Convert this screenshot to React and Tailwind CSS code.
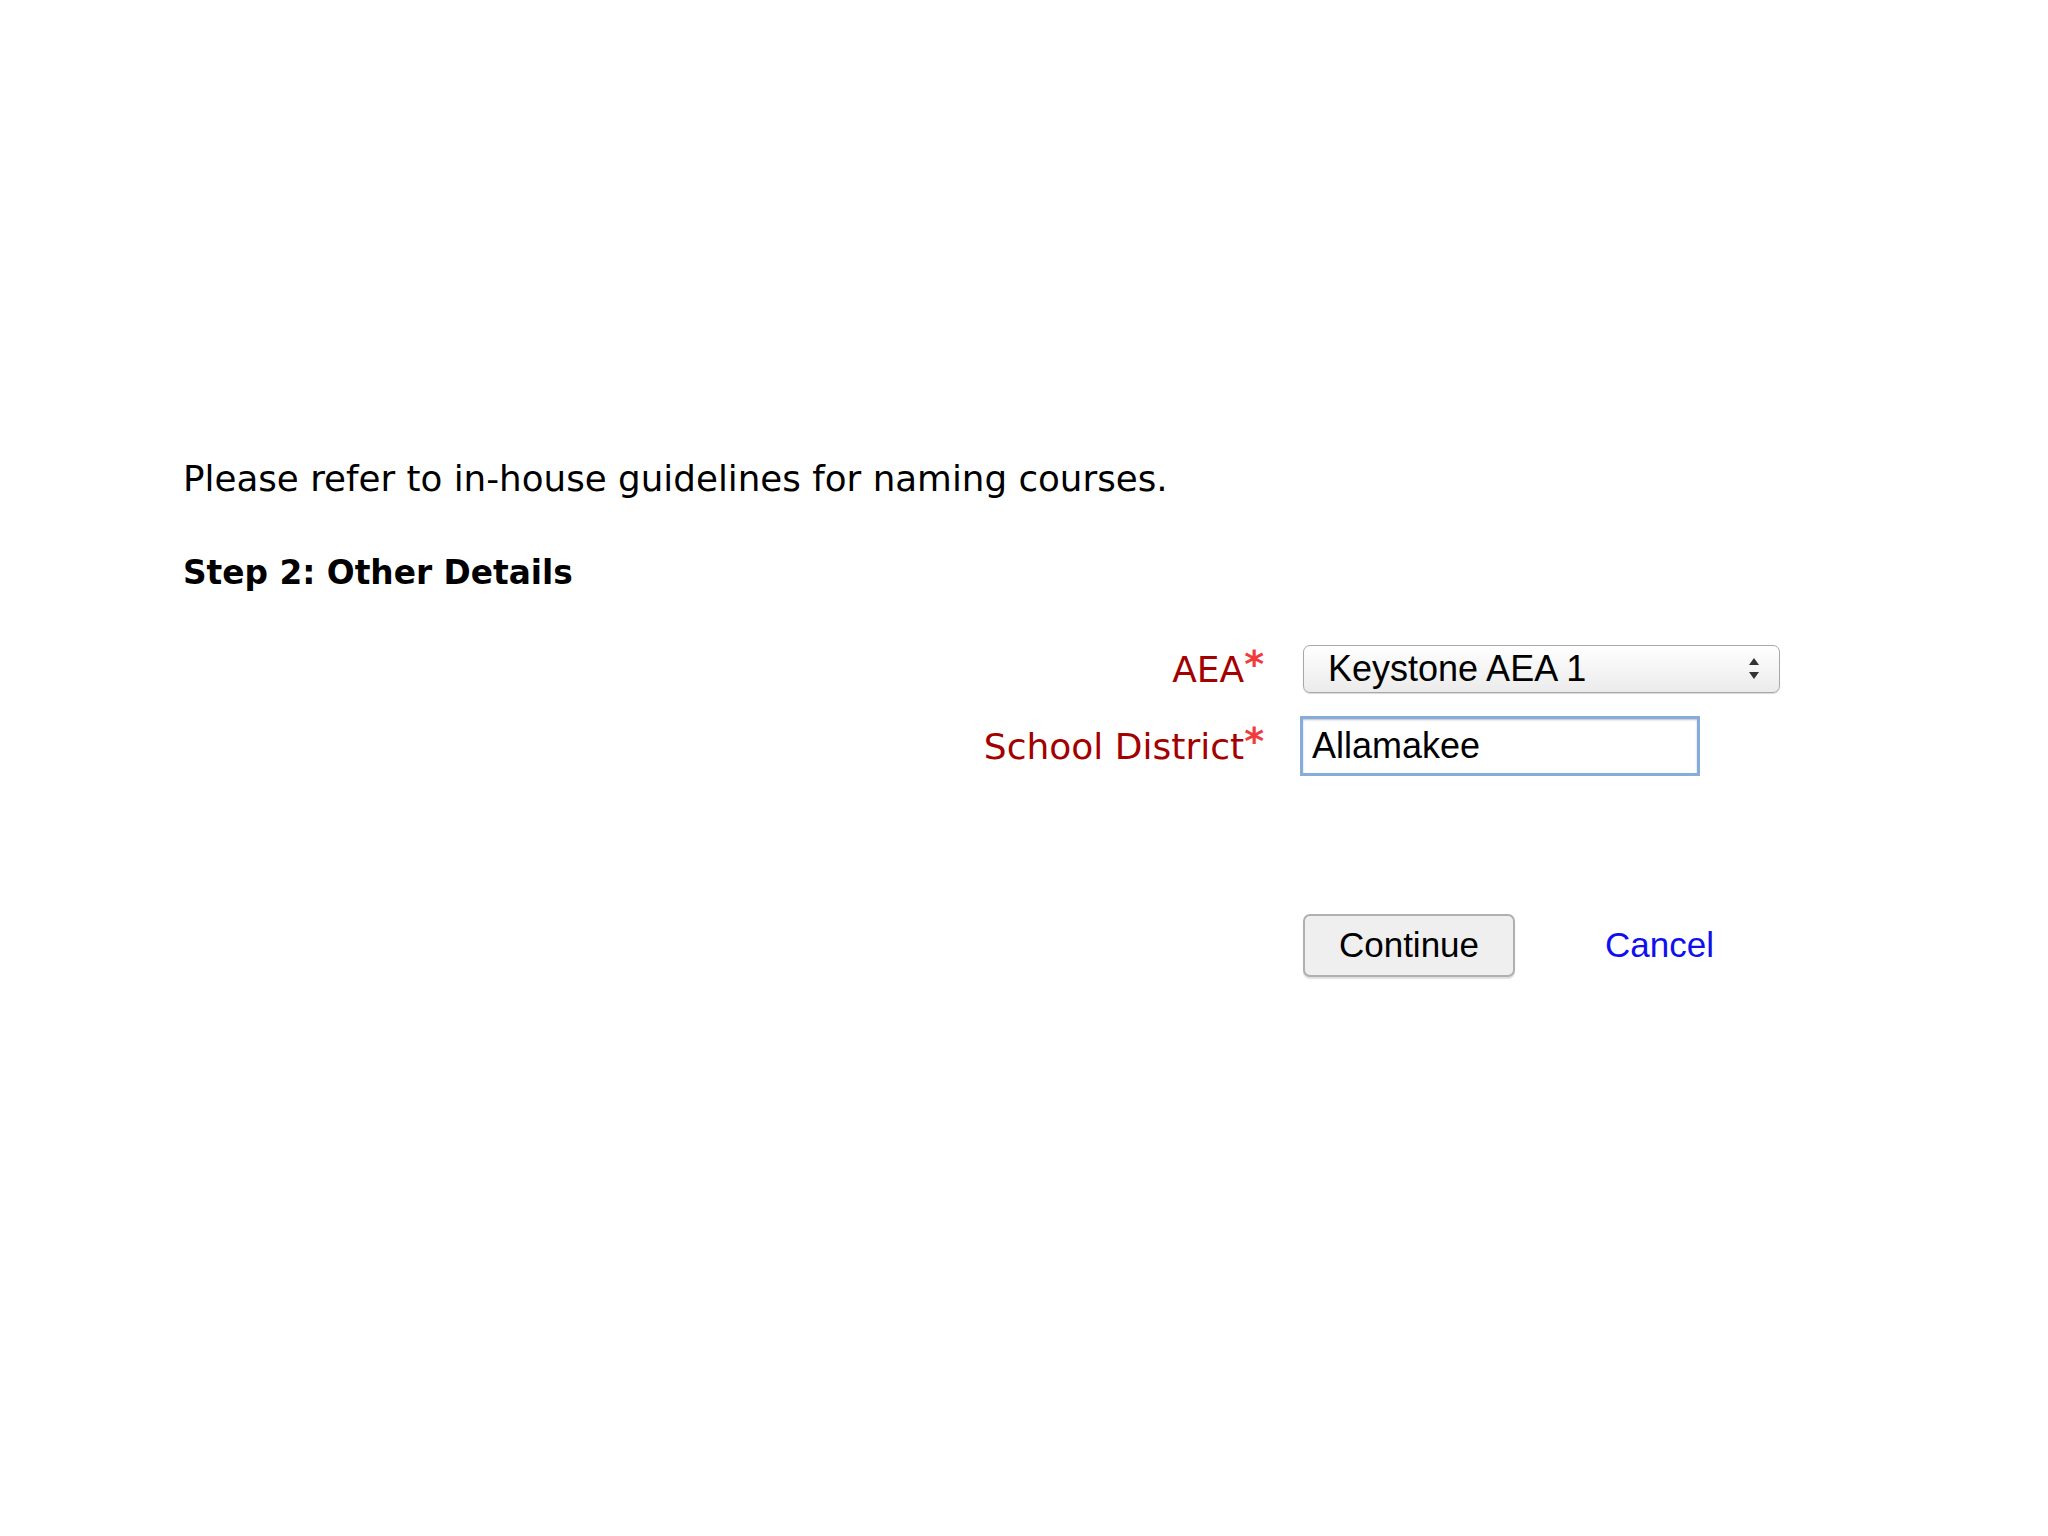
export default function App() {
  return (
    <div className="min-h-screen w-full bg-white">
      <div className="pl-[183px] pt-[461px]">
        <p className="text-[35.7px] leading-none text-black font-['DejaVu_Sans',sans-serif]">
          Please refer to in-house guidelines for naming courses.
        </p>
        <h2 className="mt-[60px] text-[32.8px] leading-none font-bold text-black font-['DejaVu_Sans',sans-serif]">
          Step 2: Other Details
        </h2>

        <div className="mt-[55px] flex flex-col gap-[23px]">
          <div className="flex items-center gap-[39px]">
            <label className="w-[1081px] text-right text-[36px] leading-none text-[#a30000] font-['DejaVu_Sans',sans-serif]">
              AEA<span className="inline-block -translate-y-[5px] text-[38px] font-bold text-[#f03c3c]">*</span>
            </label>
            <div className="flex h-[48px] w-[477px] items-center justify-between rounded-[7px] border border-[#a8a8a8] bg-gradient-to-b from-white to-[#ebebeb] pl-[24px] pr-[20px] shadow-[0_1px_1px_rgba(0,0,0,0.15)]">
              <span className="text-[36px] leading-none text-black font-['Liberation_Sans',Arial,sans-serif]">
                Keystone AEA 1
              </span>
              <svg width="10" height="22" viewBox="0 0 10 22" className="text-[#333]">
                <path d="M5 0 L10 7 L0 7 Z" fill="currentColor" />
                <path d="M0 14 L10 14 L5 21 Z" fill="currentColor" />
              </svg>
            </div>
          </div>

          <div className="flex items-center gap-[36px]">
            <label className="w-[1081px] text-right text-[36px] leading-none text-[#a30000] font-['DejaVu_Sans',sans-serif]">
              School District<span className="inline-block -translate-y-[5px] text-[38px] font-bold text-[#f03c3c]">*</span>
            </label>
            <input
              readOnly
              defaultValue="Allamakee"
              className="h-[60px] w-[400px] border-[3px] border-[#86acdc] bg-white pl-[9px] text-[36px] text-black outline-none shadow-[inset_0_1px_2px_rgba(0,0,0,0.25)] font-['Liberation_Sans',Arial,sans-serif]"
            />
          </div>

          <div className="mt-[115px] flex items-center">
            <div className="w-[1081px]" />
            <div className="ml-[39px] flex items-center gap-[90px]">
              <button className="h-[63px] w-[212px] rounded-[7px] border-2 border-[#b0b0b0] bg-[#efefef] text-[35px] text-black shadow-[0_2px_1px_rgba(0,0,0,0.12)] font-['Liberation_Sans',Arial,sans-serif]">
                Continue
              </button>
              <a href="#" className="text-[35px] text-[#1010ee] font-['Liberation_Sans',Arial,sans-serif]">
                Cancel
              </a>
            </div>
          </div>
        </div>
      </div>
    </div>
  )
}
